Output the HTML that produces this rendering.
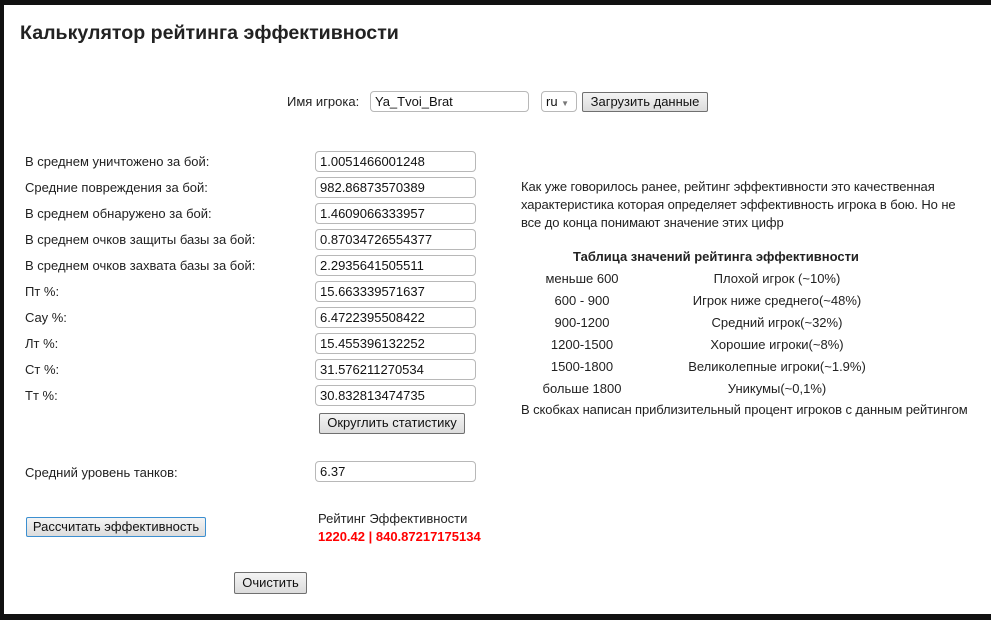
<!DOCTYPE html>
<html><head><meta charset="utf-8"><style>
body{margin:0;width:991px;height:620px;background:#111;position:relative;overflow:hidden;font-family:"Liberation Sans",Arial,sans-serif;font-size:13px;color:#222}
.pg{position:absolute;left:4px;top:5px;width:987px;height:609px;background:#fff}
.a{position:absolute;white-space:nowrap}
.in{position:absolute;box-sizing:border-box;border:1px solid #b8b8b8;border-radius:4px;height:21px;background:#fff;padding:2px 4px;font-size:13px;color:#111}
.bt{position:absolute;box-sizing:border-box;border:1px solid #707070;border-radius:2px;background:linear-gradient(#f4f4f4,#dcdcdc);font-size:13px;text-align:center;line-height:18px;color:#111}
.c{position:absolute;text-align:center;width:200px}
</style></head><body><div class="pg"></div>
<div class="a" style="left:20px;top:22px;font-size:19.6px;font-weight:bold;color:#222">Калькулятор рейтинга эффективности</div>
<div class="a" style="left:287px;top:94px">Имя игрока:</div>
<div class="in" style="left:370px;top:91px;width:159px">Ya_Tvoi_Brat</div>
<div class="in" style="left:541px;top:91px;width:36px">ru <span style="font-size:8px;color:#777">▼</span></div>
<div class="bt" style="left:582px;top:92px;width:126px;height:20px">Загрузить данные</div>

<div class="a" style="left:25px;top:154px">В среднем уничтожено за бой:</div>
<div class="a" style="left:25px;top:180px">Средние повреждения за бой:</div>
<div class="a" style="left:25px;top:206px">В среднем обнаружено за бой:</div>
<div class="a" style="left:25px;top:232px">В среднем очков защиты базы за бой:</div>
<div class="a" style="left:25px;top:258px">В среднем очков захвата базы за бой:</div>
<div class="a" style="left:25px;top:284px">Пт %:</div>
<div class="a" style="left:25px;top:310px">Сау %:</div>
<div class="a" style="left:25px;top:336px">Лт %:</div>
<div class="a" style="left:25px;top:362px">Ст %:</div>
<div class="a" style="left:25px;top:388px">Тт %:</div>
<div class="in" style="left:315px;top:151px;width:161px">1.0051466001248</div>
<div class="in" style="left:315px;top:177px;width:161px">982.86873570389</div>
<div class="in" style="left:315px;top:203px;width:161px">1.4609066333957</div>
<div class="in" style="left:315px;top:229px;width:161px">0.87034726554377</div>
<div class="in" style="left:315px;top:255px;width:161px">2.2935641505511</div>
<div class="in" style="left:315px;top:281px;width:161px">15.663339571637</div>
<div class="in" style="left:315px;top:307px;width:161px">6.4722395508422</div>
<div class="in" style="left:315px;top:333px;width:161px">15.455396132252</div>
<div class="in" style="left:315px;top:359px;width:161px">31.576211270534</div>
<div class="in" style="left:315px;top:385px;width:161px">30.832813474735</div>
<div class="bt" style="left:319px;top:413px;width:146px;height:21px">Округлить статистику</div>
<div class="a" style="left:25px;top:465px">Средний уровень танков:</div>
<div class="in" style="left:315px;top:461px;width:161px">6.37</div>
<div class="bt" style="left:26px;top:517px;width:180px;height:20px;border-color:#3c8fd0">Рассчитать эффективность</div>
<div class="a" style="left:318px;top:511px">Рейтинг Эффективности</div>
<div class="a" style="left:318px;top:529px;color:#f00;font-weight:bold">1220.42 | 840.87217175134</div>
<div class="bt" style="left:234px;top:572px;width:73px;height:22px;line-height:20px">Очистить</div>

<div class="a" style="left:521px;top:178px;line-height:18px;letter-spacing:-0.1px">Как уже говорилось ранее, рейтинг эффективности это качественная<br>характеристика которая определяет эффективность игрока в бою. Но не<br>все до конца понимают значение этих цифр</div>
<div class="a" style="left:573px;top:249px;font-weight:bold">Таблица значений рейтинга эффективности</div>
<div class="c" style="left:482px;top:271px">меньше 600</div><div class="c" style="left:677px;top:271px">Плохой игрок (~10%)</div>
<div class="c" style="left:482px;top:293px">600 - 900</div><div class="c" style="left:677px;top:293px">Игрок ниже среднего(~48%)</div>
<div class="c" style="left:482px;top:315px">900-1200</div><div class="c" style="left:677px;top:315px">Средний игрок(~32%)</div>
<div class="c" style="left:482px;top:337px">1200-1500</div><div class="c" style="left:677px;top:337px">Хорошие игроки(~8%)</div>
<div class="c" style="left:482px;top:359px">1500-1800</div><div class="c" style="left:677px;top:359px">Великолепные игроки(~1.9%)</div>
<div class="c" style="left:482px;top:381px">больше 1800</div><div class="c" style="left:677px;top:381px">Уникумы(~0,1%)</div>
<div class="a" style="left:521px;top:402px;letter-spacing:-0.1px">В скобках написан приблизительный процент игроков с данным рейтингом</div>
</body></html>
